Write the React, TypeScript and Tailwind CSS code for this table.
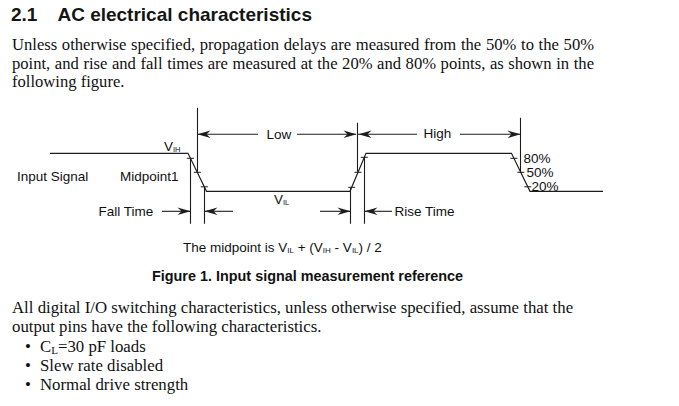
import React from "react";

const STROKE = "#1c1c1c";

function arrowPath(x: number, y: number, dir: 1 | -1, L = 13, h = 3.8, n = 9) {
  return `M${x} ${y} L${x - dir * L} ${y - h} L${x - dir * n} ${y} L${x - dir * L} ${y + h} Z`;
}

function Diagram() {
  const lines: [number, number, number, number][] = [
    // verticals
    [190.5, 158, 190.5, 224],
    [197.5, 108, 197.5, 172],
    [204.5, 187, 204.5, 224],
    [350.5, 188, 350.5, 224],
    [357.5, 123, 357.5, 172],
    [364.5, 157, 364.5, 224],
    [520.5, 118, 520.5, 173],
    // top dimension line
    [197.5, 134.5, 258, 134.5],
    [297, 134.5, 356, 134.5],
    [358, 134.5, 417, 134.5],
    [460, 134.5, 520, 134.5],
    // bottom dimension lines
    [162, 211.5, 190, 211.5],
    [205, 211.5, 233, 211.5],
    [320, 211.5, 350, 211.5],
    [365, 211.5, 392, 211.5],
  ];
  const ticks: [number, number][] = [
    [190.4, 158.5],
    [197.3, 172.5],
    [204.3, 187],
    [351.7, 187.5],
    [358, 172.5],
    [364.3, 157.5],
    [513.9, 158.5],
    [520.8, 172.5],
    [527.8, 187],
  ];
  const arrows: [number, number, 1 | -1][] = [
    [197.5, 134.5, -1],
    [356.5, 134.5, 1],
    [358.5, 134.5, -1],
    [520.5, 134.5, 1],
    [190.5, 211.5, 1],
    [204.5, 211.5, -1],
    [350.5, 211.5, 1],
    [364.5, 211.5, -1],
  ];
  const font = "'Liberation Sans', Arial, sans-serif";
  return (
    <svg width={679} height={148} viewBox="0 92.2 679 148" className="block">
      <polyline
        points="50,153.5 188,153.5 206.5,191.5 350,191.5 366,153.5 511.5,153.5 530,191.5 603,191.5"
        fill="none"
        stroke={STROKE}
        strokeWidth={1.15}
      />
      {lines.map(([x1, y1, x2, y2], i) => (
        <line key={i} x1={x1} y1={y1} x2={x2} y2={y2} stroke={STROKE} strokeWidth={1.1} />
      ))}
      {ticks.map(([x, y], i) => (
        <line key={i} x1={x - 3.5} y1={y} x2={x + 3.5} y2={y} stroke={STROKE} strokeWidth={1} />
      ))}
      {arrows.map(([x, y, d], i) => (
        <path key={i} d={arrowPath(x, y, d)} fill={STROKE} />
      ))}
      <g fontFamily={font} fontSize={13.5} fill="#111">
        <text x={164} y={151.5}>
          V<tspan fontSize={7.5} dy={1}>IH</tspan>
        </text>
        <text x={274} y={204.5}>
          V<tspan fontSize={7.5} dy={1}>IL</tspan>
        </text>
        <text x={17} y={181}>Input Signal</text>
        <text x={120} y={181}>Midpoint1</text>
        <text x={98.5} y={216}>Fall Time</text>
        <text x={266.5} y={139}>Low</text>
        <text x={423.5} y={138.7}>High</text>
        <text x={394.5} y={216}>Rise Time</text>
        <text x={523.5} y={163}>80%</text>
        <text x={526.5} y={177}>50%</text>
        <text x={531.5} y={191}>20%</text>
      </g>
    </svg>
  );
}

function Sub({ children }: { children: React.ReactNode }) {
  return <span className="text-[8px] align-[-1px]">{children}</span>;
}

export default function App() {
  const serif = "font-['Liberation_Serif','Times_New_Roman',serif]";
  return (
    <div className="w-[679px] h-[406px] bg-white overflow-hidden text-[#111]">
      <h2 className="pt-[4px] pl-[11px] text-[19px] leading-[22px] font-bold font-['Liberation_Sans',Arial,sans-serif] text-[#151515]">
        <span>2.1</span>
        <span className="pl-[20px]">AC electrical characteristics</span>
      </h2>
      <div className={`${serif} mt-[10px] pl-[12px] w-[594px] text-[16.6px] leading-[18.6px]`}>
        <div className="text-justify [text-align-last:justify]">
          Unless otherwise specified, propagation delays are measured from the 50% to the 50%
        </div>
        <div className="text-justify [text-align-last:justify]">
          point, and rise and fall times are measured at the 20% and 80% points, as shown in the
        </div>
        <div>following figure.</div>
      </div>
      <Diagram />
      <div className="font-['Liberation_Sans',Arial,sans-serif]">
        <div className="pl-[183px] text-[13.5px] leading-[16px]">
          The midpoint is V<Sub>IL</Sub> + (V<Sub>IH</Sub> - V<Sub>IL</Sub>) / 2
        </div>
        <div className="mt-[9px] pl-[152px] text-[14.4px] leading-[17px] font-bold">
          Figure 1. Input signal measurement reference
        </div>
      </div>
      <div className={`${serif} mt-[13px] pl-[12px] text-[16.8px] leading-[19px]`}>
        <div className="h-[19px]">All digital I/O switching characteristics, unless otherwise specified, assume that the</div>
        <div className="h-[19px]">output pins have the following characteristics.</div>
        <ul className="mt-[1px]">
          <li className="flex h-[19px]">
            <span className="pl-[13px] w-[28px]">•</span>
            <span>
              C<span className="text-[11px] align-[-2px] leading-none">L</span>=30 pF loads
            </span>
          </li>
          <li className="flex h-[19px]">
            <span className="pl-[13px] w-[28px]">•</span>
            <span>Slew rate disabled</span>
          </li>
          <li className="flex h-[19px]">
            <span className="pl-[13px] w-[28px]">•</span>
            <span>Normal drive strength</span>
          </li>
        </ul>
      </div>
    </div>
  );
}
